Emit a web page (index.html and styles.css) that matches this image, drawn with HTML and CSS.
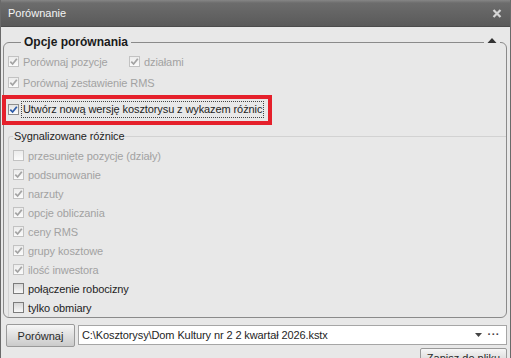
FILE: index.html
```html
<!DOCTYPE html>
<html lang="pl">
<head>
    <meta charset="UTF-8">
    <title>Porównanie</title>
    <link rel="stylesheet" href="styles.css">
</head>
<body>
    <div class="window">
        <div class="titlebar">
            <span class="title">Porównanie</span>
            <svg class="close" width="10" height="9" viewBox="0 0 10 9">
                <path d="M1.5 1 L8.5 8 M8.5 1 L1.5 8" stroke="#d6d6d6" stroke-width="2.2" fill="none"/>
            </svg>
        </div>

        <div class="content">
            <fieldset class="group">
                <legend>Opcje porównania</legend>
                <span class="collapse">
                    <svg width="10" height="6" viewBox="0 0 10 6"><path d="M0.5 6 L5 1 L9.5 6 Z" fill="#333"/></svg>
                </span>

                <div class="row first">
                    <label class="check disabled wide"><span class="cb"><svg viewBox="0 0 11 11"><path d="M2.3 5.6 L4.6 8 L8.8 2.8" class="tick"/></svg></span>Porównaj pozycje</label>
                    <label class="check disabled"><span class="cb"><svg viewBox="0 0 11 11"><path d="M2.3 5.6 L4.6 8 L8.8 2.8" class="tick"/></svg></span>działami</label>
                </div>
                <div class="row">
                    <label class="check disabled"><span class="cb"><svg viewBox="0 0 11 11"><path d="M2.3 5.6 L4.6 8 L8.8 2.8" class="tick"/></svg></span>Porównaj zestawienie RMS</label>
                </div>
                <div class="row highlight">
                    <label class="check active"><span class="cb"><svg viewBox="0 0 11 11"><path d="M2.3 5.6 L4.6 8 L8.8 2.8" class="tick"/></svg></span><span class="focus">Utwórz nową wersję kosztorysu z wykazem różnic</span></label>
                    <span class="marker"></span>
                </div>

                <fieldset class="subgroup">
                    <legend>Sygnalizowane różnice</legend>
                    <div class="item"><label class="check disabled"><span class="cb"></span>przesunięte pozycje (działy)</label></div>
                    <div class="item"><label class="check disabled"><span class="cb"><svg viewBox="0 0 11 11"><path d="M2.3 5.6 L4.6 8 L8.8 2.8" class="tick"/></svg></span>podsumowanie</label></div>
                    <div class="item"><label class="check disabled"><span class="cb"><svg viewBox="0 0 11 11"><path d="M2.3 5.6 L4.6 8 L8.8 2.8" class="tick"/></svg></span>narzuty</label></div>
                    <div class="item"><label class="check disabled"><span class="cb"><svg viewBox="0 0 11 11"><path d="M2.3 5.6 L4.6 8 L8.8 2.8" class="tick"/></svg></span>opcje obliczania</label></div>
                    <div class="item"><label class="check disabled"><span class="cb"><svg viewBox="0 0 11 11"><path d="M2.3 5.6 L4.6 8 L8.8 2.8" class="tick"/></svg></span>ceny RMS</label></div>
                    <div class="item"><label class="check disabled"><span class="cb"><svg viewBox="0 0 11 11"><path d="M2.3 5.6 L4.6 8 L8.8 2.8" class="tick"/></svg></span>grupy kosztowe</label></div>
                    <div class="item"><label class="check disabled"><span class="cb"><svg viewBox="0 0 11 11"><path d="M2.3 5.6 L4.6 8 L8.8 2.8" class="tick"/></svg></span>ilość inwestora</label></div>
                    <div class="item"><label class="check enabled"><span class="cb"></span>połączenie robocizny</label></div>
                    <div class="item"><label class="check enabled"><span class="cb"></span>tylko obmiary</label></div>
                </fieldset>
            </fieldset>

            <div class="footer">
                <div class="file-row">
                    <button class="btn compare">Porównaj</button>
                    <div class="combo">
                        <span class="path">C:\Kosztorysy\Dom Kultury nr 2 2 kwartał 2026.kstx</span>
                        <svg class="arrow" width="7" height="4" viewBox="0 0 7 4"><path d="M0 0 L7 0 L3.5 4 Z" fill="#444"/></svg>
                        <span class="dots">···</span>
                    </div>
                </div>
                <div class="save-row">
                    <button class="btn save">Zapisz do pliku</button>
                </div>
            </div>
        </div>
    </div>
</body>
</html>
```

FILE: styles.css
```css
:root {
    --bg: #e8e8e8;
    --text: #1e1e1e;
    --disabled: #a2a2a2;
    --frame: #8a8a8a;
}

body {
    margin: 0;
    font-family: "Liberation Sans", Arial, sans-serif;
    font-size: 11px;
    letter-spacing: -0.1px;
    color: var(--text);
}

.window {
    width: 511px;
    height: 358px;
    box-sizing: border-box;
    background: var(--bg);
    border-left: 1px solid #6a6a6a;
    border-right: 1px solid #6a6a6a;
    overflow: hidden;
}

.titlebar {
    height: 26px;
    display: flex;
    align-items: center;
    justify-content: space-between;
    padding: 0 8px 0 7px;
    background: linear-gradient(#868686 0, #6c6c6c 3px, #626262 60%, #5a5a5a 100%);
    border-bottom: 1px solid #4c4c4c;
}

.title {
    color: #f4f4f4;
    font-size: 11px;
    letter-spacing: 0;
}

.close {
    display: block;
    margin-top: 1px;
}

.content {
    padding: 0 3px 0 2px;
}

.group {
    position: relative;
    margin: 8px 0 0;
    padding: 0;
    border: 1px solid var(--frame);
    border-radius: 6px;
    min-width: 0;
}

.group > legend {
    margin-left: 17px;
    padding: 0 3px;
    font-weight: bold;
    font-size: 12px;
    line-height: 14px;
    letter-spacing: 0;
    color: #1a1a1a;
}

.collapse {
    position: absolute;
    top: -12px;
    right: 6px;
    width: 16px;
    height: 8px;
    background: var(--bg);
    display: flex;
    align-items: flex-start;
    justify-content: center;
}

.collapse svg {
    display: block;
}

.row {
    position: relative;
    display: flex;
    align-items: center;
    height: 21px;
    padding-left: 4px;
}

.row.first {
    margin-top: 2px;
}

.row.highlight {
    margin-top: 6px;
}

.check {
    display: flex;
    align-items: center;
    white-space: nowrap;
}

.check.wide {
    width: 121px;
}

.cb {
    width: 11px;
    height: 11px;
    box-sizing: border-box;
    margin-right: 4px;
    border: 1px solid #c2c2c2;
    background: linear-gradient(#ececec, #fbfbfb);
    display: flex;
    align-items: center;
    justify-content: center;
}

.cb svg {
    width: 11px;
    height: 11px;
    display: block;
    flex: none;
}

.tick {
    fill: none;
    stroke: #a4a4a4;
    stroke-width: 1.8;
}

.disabled {
    color: var(--disabled);
}

.active .cb {
    border-color: #8e8e8e;
    background: linear-gradient(#e4e4e4, #fdfdfd);
}

.active .tick {
    stroke: #2c5aa8;
}

.enabled .cb {
    border-color: #7c7c7c;
    background: linear-gradient(#d6d6d6, #f8f8f8);
}

.focus {
    padding: 1px 1px 2px 1px;
    margin-left: -2px;
    border: 1px dotted #444;
}

.marker {
    position: absolute;
    left: -2px;
    top: -4px;
    width: 262px;
    height: 22px;
    border: 4px solid #e5202b;
    pointer-events: none;
}

.subgroup {
    margin: 10px 0 0 4px;
    padding: 3px 0 0 0;
    border: none;
    border-top: 1px solid #d2d2d2;
    border-left: 1px solid #d2d2d2;
    border-top-left-radius: 3px;
    min-width: 0;
}

.subgroup > legend {
    margin-left: 4px;
    padding: 0 1px;
    line-height: 13px;
    color: #1e1e1e;
}

.item {
    display: flex;
    align-items: center;
    height: 19px;
    padding-left: 4px;
}

.footer {
    padding-top: 6px;
}

.file-row {
    display: flex;
    align-items: flex-start;
    gap: 3px;
    padding-left: 3px;
}

.btn {
    font-family: "Liberation Sans", Arial, sans-serif;
    font-size: 11px;
    color: #2a2a2a;
    border: 1px solid #9a9a9a;
    border-radius: 2px;
    background: linear-gradient(#f6f6f6 0, #e2e2e2 45%, #cbcbcb 100%);
    padding: 0;
}

.compare {
    width: 69px;
    height: 23px;
}

.combo {
    flex: 1;
    height: 20px;
    margin-top: 1px;
    box-sizing: border-box;
    background: #fff;
    border: 1px solid #a6a6a6;
    display: flex;
    align-items: center;
    padding: 0 6px 0 3px;
}

.path {
    flex: 1;
    white-space: nowrap;
}

.arrow {
    display: block;
    margin-right: 6px;
}

.dots {
    font-weight: bold;
    letter-spacing: 0.5px;
    color: #444;
    line-height: 10px;
    padding-bottom: 3px;
}

.save-row {
    display: flex;
    justify-content: flex-end;
    margin-top: 1px;
}

.save {
    width: 87px;
    height: 20px;
}
```
